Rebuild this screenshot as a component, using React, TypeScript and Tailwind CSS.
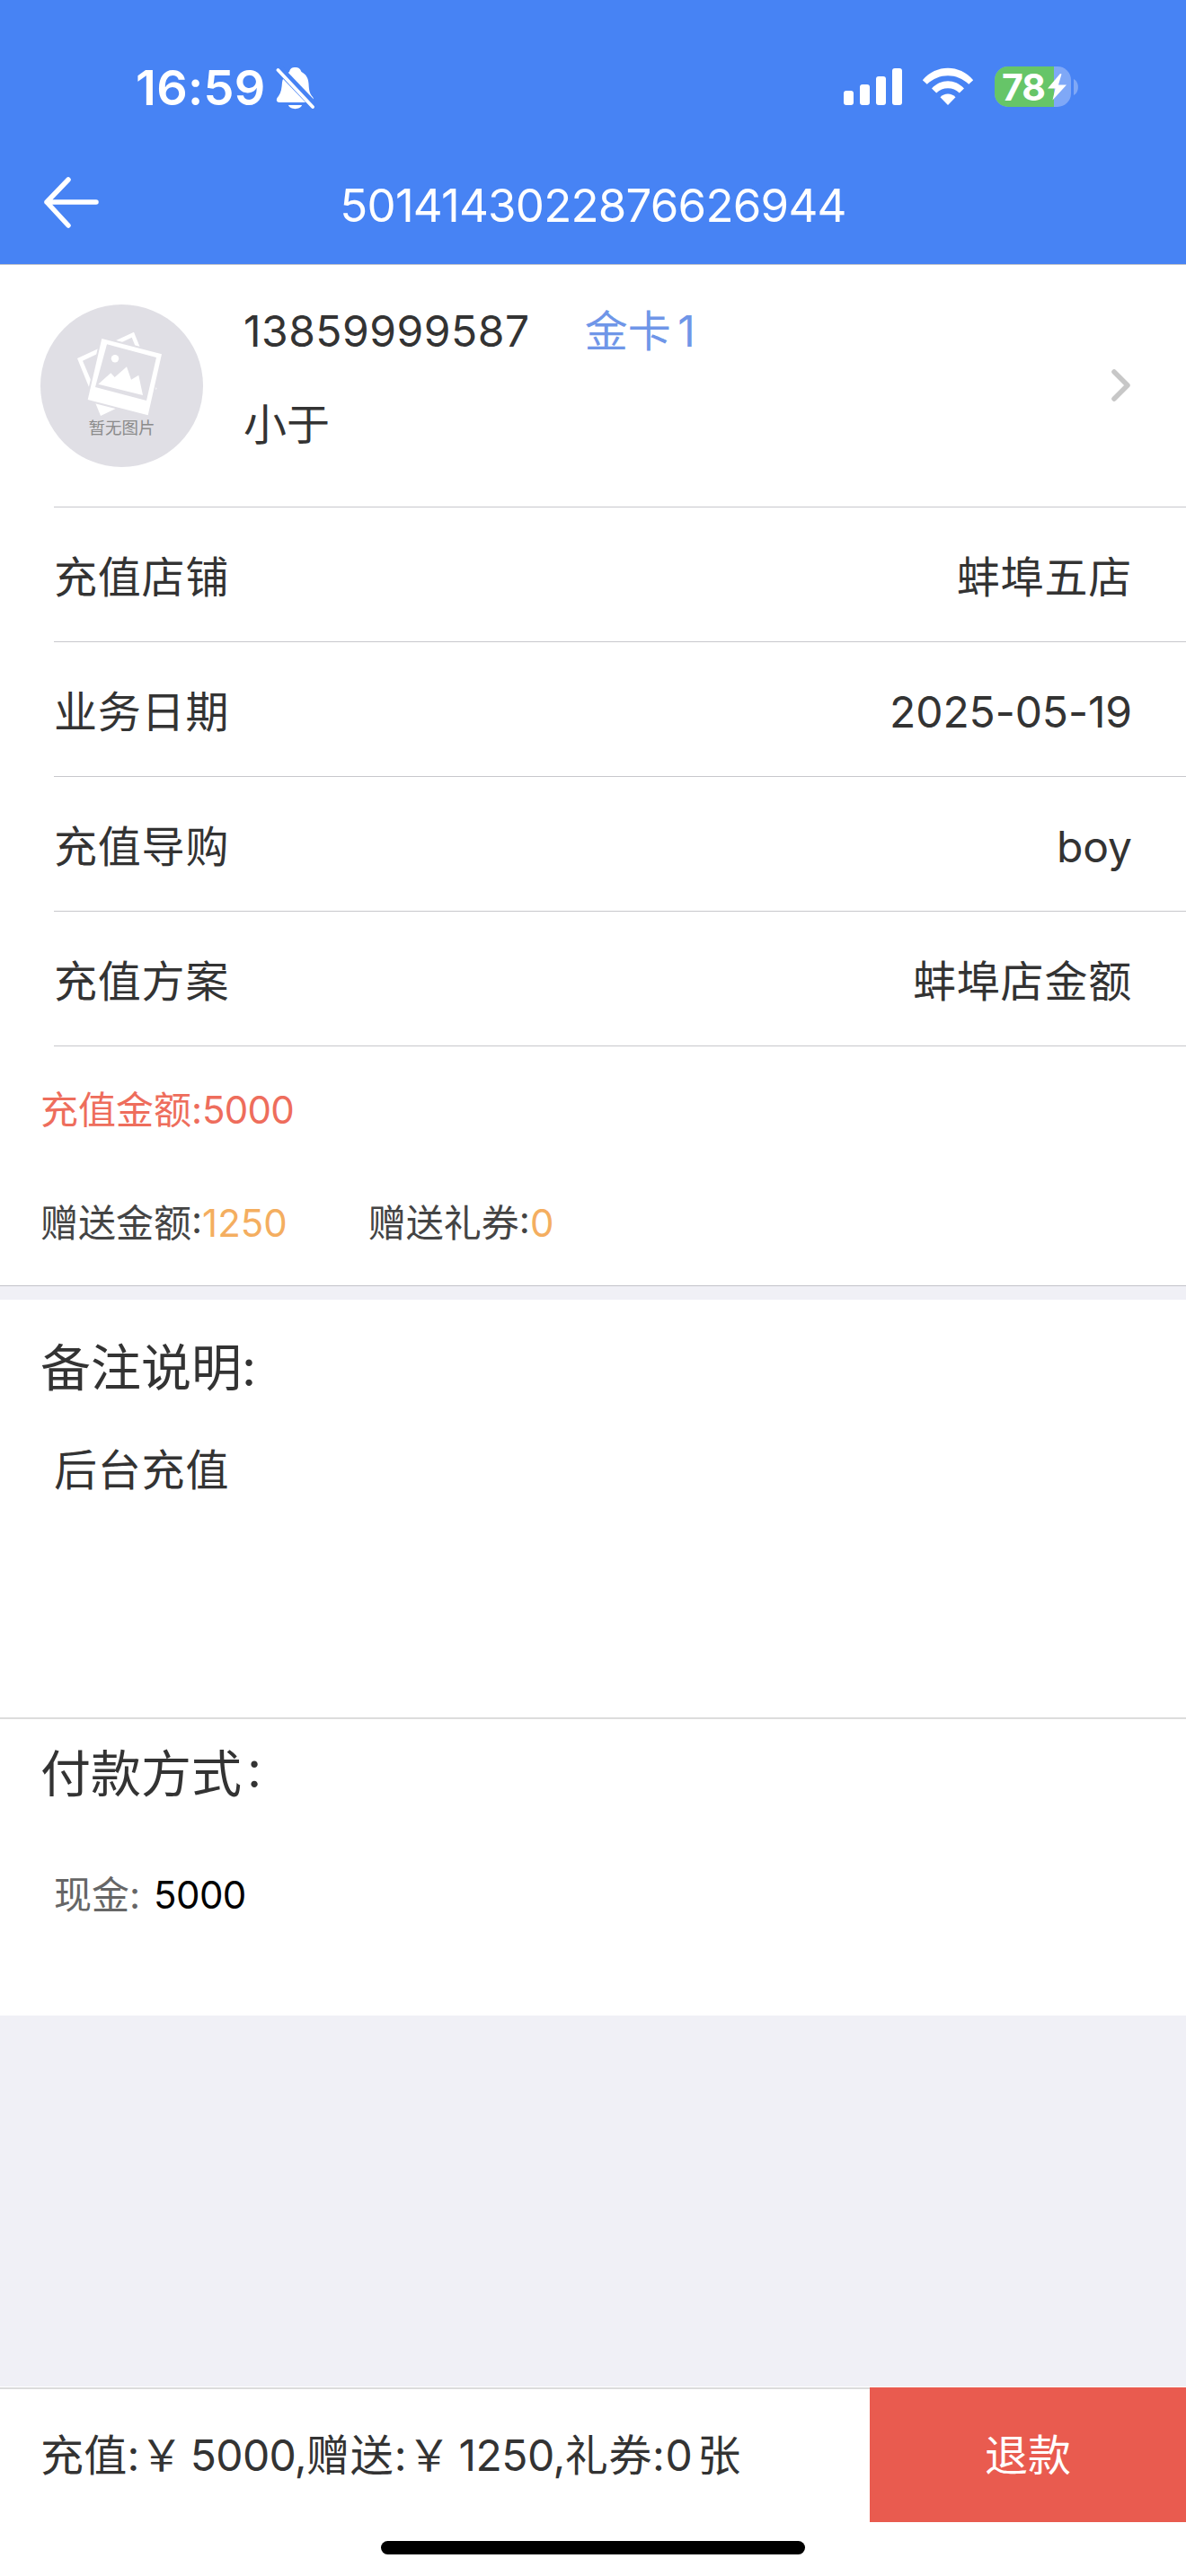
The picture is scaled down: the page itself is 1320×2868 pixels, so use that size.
import React from "react";

const rows = [
  { label: "充值店铺", value: "蚌埠五店", cjk: true },
  { label: "业务日期", value: "2025-05-19", cjk: false },
  { label: "充值导购", value: "boy", cjk: false },
  { label: "充值方案", value: "蚌埠店金额", cjk: true },
];

function StatusBar() {
  return (
    <div className="flex h-[196px] items-start pl-[151px] pr-[120px] text-white">
      <span className="mt-[62px] w-[145px] whitespace-nowrap text-[54px] font-semibold leading-[72px] tracking-[0.3px]">16:59</span>
      <svg className="ml-[11px] mt-[74px] h-[50px] w-[44px]" viewBox="0 0 44 50" fill="#fff">
        <path d="M7 18C8 11 12 8 15 6C16 2 18 1 21.500 1C25 1 27 2 28.500 6C34 9 36 13 36.500 19C37 27 37.500 30 41 34C43 37 42 40 39 40H4C0 40 0 36 3 33C6 29 6.500 24 7 18Z" />
        <path d="M14 43H29C27.500 48.500 15.500 48.500 14 43Z" />
        <path d="M1 0L44 45" stroke="#4783f4" strokeWidth="9" />
        <path d="M2.500 4L41 45" stroke="#fff" strokeWidth="3.800" strokeLinecap="round" />
      </svg>
      <div className="ml-auto mt-[76px] flex h-[41px] items-end gap-[7px]">
        <span className="h-[16px] w-[11px] rounded-[3px] bg-white" />
        <span className="h-[23px] w-[11px] rounded-[3px] bg-white" />
        <span className="h-[32px] w-[11px] rounded-[3px] bg-white" />
        <span className="h-[41px] w-[11px] rounded-[3px] bg-white" />
      </div>
      <svg className="ml-[22px] mt-[75px] h-[42px] w-[58px]" viewBox="0 0 58 42" fill="#fff">
        <path d="M.8 14.200C16 -3.600 42 -3.600 57.200 14.200L52.200 18.800C39 6 19 6 5.800 18.800Z" />
        <path d="M11 23.500C21 12.500 37 12.500 47 23.500L41.800 28.500C35 21.500 23 21.500 16.200 28.500Z" />
        <path d="M20.500 33.200C25 28.300 33 28.300 37.500 33.200L29 42Z" />
      </svg>
      <div className="ml-[23px] mt-[74px] flex items-center">
        <div className="relative flex h-[45px] w-[85px] items-center rounded-[15px] bg-[#7fa8f7]">
          <div className="absolute inset-y-0 left-0 w-[66px] rounded-l-[15px] bg-[#66c568]" />
          <span className="relative ml-[8px] text-[41px] font-bold leading-[54px] tracking-[-1px]">78</span>
          <svg className="absolute left-[59px] top-[8px] h-[30px] w-[21px]" viewBox="0 0 21 30" fill="#fff">
            <path d="M14 0L0 16.500H8.500L5.500 29.500L21 12.500H12L15.500 .5Z" />
          </svg>
        </div>
        <svg className="ml-[3px] h-[18px] w-[5px]" viewBox="0 0 5 18">
          <path d="M0 0C6.500 3 6.500 15 0 18Z" fill="#7fa8f7" />
        </svg>
      </div>
    </div>
  );
}

function Avatar() {
  return (
    <div className="relative size-[181px] shrink-0 rounded-full bg-[#e0dfe5]">
      <svg className="absolute inset-0" width="181" height="181" viewBox="0 0 181 181">
        <path d="M41 60L104 30.700L129.500 94L67 124Z" fill="#fff" />
        <path d="M47 62.700L101.700 36.700L124 92L62 98Z" fill="#e0dfe5" />
        <path d="M68.300 38L135 55.300L119.700 123.300L52.700 106Z" fill="#fff" stroke="#e0dfe5" strokeWidth="4" paintOrder="stroke" />
        <path d="M74 44.300L129 59L118 107L61 92Z" fill="#e0dfe5" />
        <circle cx="83" cy="60.300" r="4.200" fill="#fff" />
        <path d="M64.300 88.700L78.300 76.300L82.700 81L96 69.300L101 83.700L109.300 78.700L114 101Z" fill="#fff" />
      </svg>
      <span className="absolute inset-x-0 top-[125px] text-center text-[18.500px] leading-[24px] text-[#8b8b8b]">暂无图片</span>
    </div>
  );
}

export default function App() {
  return (
    <div className="flex h-[2868px] w-[1320px] flex-col bg-[#f0f0f6] font-['Inter','Noto_Sans_CJK_SC',sans-serif] text-[48px] text-[#333]">
      <header className="h-[295px] border-b border-[#c3c5cb] bg-[#4783f4]">
        <StatusBar />
        <div className="relative flex h-[66px] items-center justify-center text-white">
          <svg className="absolute left-[48px] top-0 h-[58px] w-[63px]" viewBox="0 0 63 58" fill="none" stroke="#fff" strokeWidth="5.500" strokeLinecap="round" strokeLinejoin="round">
            <path d="M28 4L4 29L28 55M4 29H59" />
          </svg>
          <h1 className="text-[51px] font-normal leading-[66px] tracking-[-0.8px]">5014143022876626944</h1>
        </div>
      </header>

      <section className="border-b border-[#c3c3c9] bg-white">
        <div className="flex h-[269px] pl-[45px] pr-[60px] pt-[44px]">
          <Avatar />
          <div className="ml-[45px] flex flex-col">
            <div className="-mt-[1px] flex h-[62px] items-center">
              <span className="tracking-[0.5px]">13859999587</span>
              <span className="ml-[61px] text-[#6f96e8] [word-spacing:-6px]">金卡 1</span>
            </div>
            <span className="mt-[40px] leading-[66px]">小于</span>
          </div>
          <svg className="ml-auto mt-[71px] h-[38px] w-[24px]" viewBox="0 0 24 38" fill="none" stroke="#c7c7c7" strokeWidth="5.500" strokeLinecap="round" strokeLinejoin="round">
            <path d="M4 4L19 19L4 34" />
          </svg>
        </div>
        {rows.map((row) => (
          <div key={row.label} className="ml-[60px] flex h-[150px] items-center justify-between border-t border-[#c8c8cc] pr-[60px] pt-[6px]">
            <span className="tracking-[0.8px]">{row.label}</span>
            <span className={row.cjk ? "tracking-[0.8px]" : "tracking-[-0.1px]"}>{row.value}</span>
          </div>
        ))}
        <div className="ml-[60px] border-t border-[#c8c8cc]" />
        <div className="flex h-[266px] flex-col pl-[45px] text-[42px] leading-[60px]">
          <span className="mt-[41px] text-[#ee6d5c]">
            充值金额:<span className="tracking-[-0.8px]">5000</span>
          </span>
          <div className="mt-[66px] flex text-[#444]">
            <span>赠送金额:<span className="text-[#f4ae60]">1250</span></span>
            <span className="ml-[90px]">赠送礼券:<span className="text-[#f4ae60]">0</span></span>
          </div>
        </div>
      </section>

      <section className="mt-[15px] h-[467px] border-b-2 border-[#dcdcdc] bg-white pt-[37px]">
        <h2 className="pl-[45px] text-[56px] leading-[78px]">备注说明:</h2>
        <p className="mt-[40px] pl-[60px] leading-[70px] tracking-[0.8px]">后台充值</p>
      </section>

      <section className="h-[330px] bg-white pt-[22px]">
        <h2 className="flex pl-[45px] text-[56px] leading-[78px]">
          付款方式<span className="-mt-[5px] ml-[6px]">:</span>
        </h2>
        <p className="mt-[66px] flex pl-[60px] text-[42px] leading-[60px] text-[#666]">
          现金: <span className="ml-[15px] tracking-[-0.6px] text-black">5000</span>
        </p>
      </section>

      <footer className="mt-auto flex h-[211px] flex-col border-t border-white bg-white">
        <div className="flex h-[150px]">
          <div className="flex flex-1 items-center whitespace-pre border-t-2 border-[#dcdcdc] pl-[45px] [word-spacing:-5px]">
            <span className="tracking-[0.3px]">充值:￥</span>
            <span className="tracking-[-0.7px]"> 5000,</span>
            <span className="tracking-[0.9px]">赠送:￥</span>
            <span className="tracking-[-0.5px]"> 1250,</span>
            <span className="tracking-[0.6px]">礼券:0</span>
            <span className="ml-[5px]">张</span>
          </div>
          <button className="w-[352px] bg-[#e95b4f] pt-[2px] text-white">退款</button>
        </div>
        <div className="mx-auto mt-[21px] h-[15px] w-[472px] rounded-full bg-black" />
      </footer>
    </div>
  );
}
